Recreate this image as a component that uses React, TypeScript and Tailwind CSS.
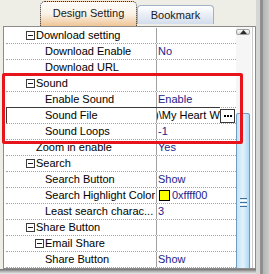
import React from "react";

type Row = {
  label: string;
  cat?: boolean;
  pl: string;
  value?: string;
  special?: "file" | "color";
};

const rows: Row[] = [
  { label: "Download setting", cat: true, pl: "pl-[20px]" },
  { label: "Download Enable", pl: "pl-[39px]", value: "No" },
  { label: "Download URL", pl: "pl-[39px]" },
  { label: "Sound", cat: true, pl: "pl-[20px]" },
  { label: "Enable Sound", pl: "pl-[39px]", value: "Enable" },
  { label: "Sound File", pl: "pl-[38px]", special: "file" },
  { label: "Sound Loops", pl: "pl-[39px]", value: "-1" },
  { label: "Zoom in enable", pl: "pl-[30px]", value: "Yes" },
  { label: "Search", cat: true, pl: "pl-[20px]" },
  { label: "Search Button", pl: "pl-[39px]", value: "Show" },
  { label: "Search Highlight Color", pl: "pl-[39px]", special: "color" },
  { label: "Least search charac...", pl: "pl-[39px]", value: "3" },
  { label: "Share Button", cat: true, pl: "pl-[20px]" },
  { label: "Email Share", cat: true, pl: "pl-[29px]" },
  { label: "Share Button", pl: "pl-[39px]", value: "Show" },
];

function Minus() {
  return (
    <span className="w-[9px] h-[9px] border border-[#3c3c3c] bg-white flex items-center justify-center mr-[1px] shrink-0">
      <span className="w-[5px] h-[1px] bg-[#1a1a1a]" />
    </span>
  );
}

function GridRow({ r }: { r: Row }) {
  const isFile = r.special === "file";
  return (
    <div className="relative h-[16px] flex border-b border-dotted border-[#a3a3a3]">
      {isFile && <div className="absolute -top-[1px] left-0 w-[214px] h-[1px] bg-[#3a3a3a]" />}
      <div
        className={`w-[150px] shrink-0 flex items-center overflow-hidden whitespace-nowrap text-black ${r.pl} ${
          isFile ? "border-l border-[#3a3a3a]" : ""
        }`}
      >
        {r.cat && <Minus />}
        <span>{r.label}</span>
      </div>
      <div className="flex-1 border-l border-[#a0a0a0] flex items-center overflow-hidden whitespace-nowrap">
        {r.value && <span className="pl-[1px] text-[#1e228a]">{r.value}</span>}
        {r.special === "color" && (
          <span className="flex items-center pl-[2px] text-[#1e228a]">
            <span className="w-[11px] h-[11px] border border-black bg-[#ffff00] mr-[2px]" />
            0xffff00
          </span>
        )}
        {isFile && (
          <div className="flex items-center h-full w-full">
            <div className="w-[63px] overflow-hidden bg-white h-full flex items-center">
              <span className="-ml-[2px] text-black">)\My Heart W</span>
            </div>
            <div className="w-[15px] h-[14px] mt-[1px] border border-[#3a3a3a] bg-white flex items-center justify-center gap-[1px]">
              <span className="w-[2px] h-[2px] bg-black" />
              <span className="w-[2px] h-[2px] bg-black" />
              <span className="w-[2px] h-[2px] bg-black" />
            </div>
          </div>
        )}
      </div>
    </div>
  );
}

export default function App() {
  return (
    <div className="relative w-[269px] h-[274px] overflow-hidden flex bg-[#eeeee7] font-['Liberation_Sans',Arial,sans-serif] text-[11px] leading-none">
      <div className="w-[256px] flex flex-col">
        {/* tabs */}
        <div className="h-[26px] flex items-end pl-[40px]">
          <div className="w-[97px] h-[25px] rounded-t-[5px] border-t border-l border-r border-dotted border-[#2a2a2a] bg-gradient-to-b from-[#fdfcfa] via-[#faf2e6] to-[#efc595] flex items-center justify-center text-[#1a1a1a] pb-[1px]">
            Design Setting
          </div>
          <div className="w-[77px] h-[19px] mb-[2px] rounded-t-[4px] border border-b-0 border-[#a3b1c6] bg-gradient-to-b from-[#ffffff] to-[#d3ddec] flex items-center justify-center text-[#1a1a1a]">
            Bookmark
          </div>
        </div>
        {/* grid */}
        <div className="ml-[3px] w-[253px] h-[243px] border border-[#8c8c8c] bg-white flex overflow-hidden">
          <div className="w-[232px] pl-[2px] pt-[1px] flex flex-col">
            {rows.map((r, i) => (
              <GridRow key={i} r={r} />
            ))}
          </div>
          <div className="w-[15px] flex flex-col bg-[#f6f6f6] pt-[2px]">
            <div className="w-[14px] h-[15px] rounded-[2px] border border-[#9e9e9e] bg-gradient-to-b from-[#fbfbfb] to-[#d9d9d9] flex items-center justify-center">
              <svg width="7" height="4" viewBox="0 0 7 4">
                <path d="M0 4 L3.5 0 L7 4 Z" fill="#2a2a2a" />
              </svg>
            </div>
            <div className="h-[78px] shrink-0" />
            <div className="w-[14px] h-[200px] shrink-0 rounded-t-[2px] border border-[#6f9dc6] bg-gradient-to-r from-[#c3e3f7] via-[#e3f3fc] to-[#aed8f2] flex flex-col items-center pt-[84px] gap-[1px]">
              <span className="w-[7px] h-[1px] bg-[#3f6f9c]" />
              <span className="w-[7px] h-[1px] bg-white" />
              <span className="w-[7px] h-[1px] bg-[#3f6f9c]" />
              <span className="w-[7px] h-[1px] bg-white" />
              <span className="w-[7px] h-[1px] bg-[#3f6f9c]" />
            </div>
          </div>
          <div className="w-[1px] bg-white" />
          <div className="w-[1px] bg-[#c9c9c9]" />
          <div className="flex-1 bg-white" />
        </div>
        <div className="flex-1 bg-gradient-to-b from-[#6e6e6e] via-[#b5b5b5] to-[#ececec]" />
      </div>
      {/* right frame */}
      <div className="w-[13px] flex">
        <div className="w-[4px] bg-[#d6d6d4]" />
        <div className="w-[3px] bg-[#8f8f8f]" />
        <div className="flex-1 bg-gradient-to-r from-[#b4b4b4] to-[#c9c9c9]" />
      </div>
      {/* red highlight */}
      <div className="absolute left-[2px] top-[73px] w-[241px] h-[71px] border-[3px] border-[#e8141c] rounded-[2px] pointer-events-none" />
    </div>
  );
}
